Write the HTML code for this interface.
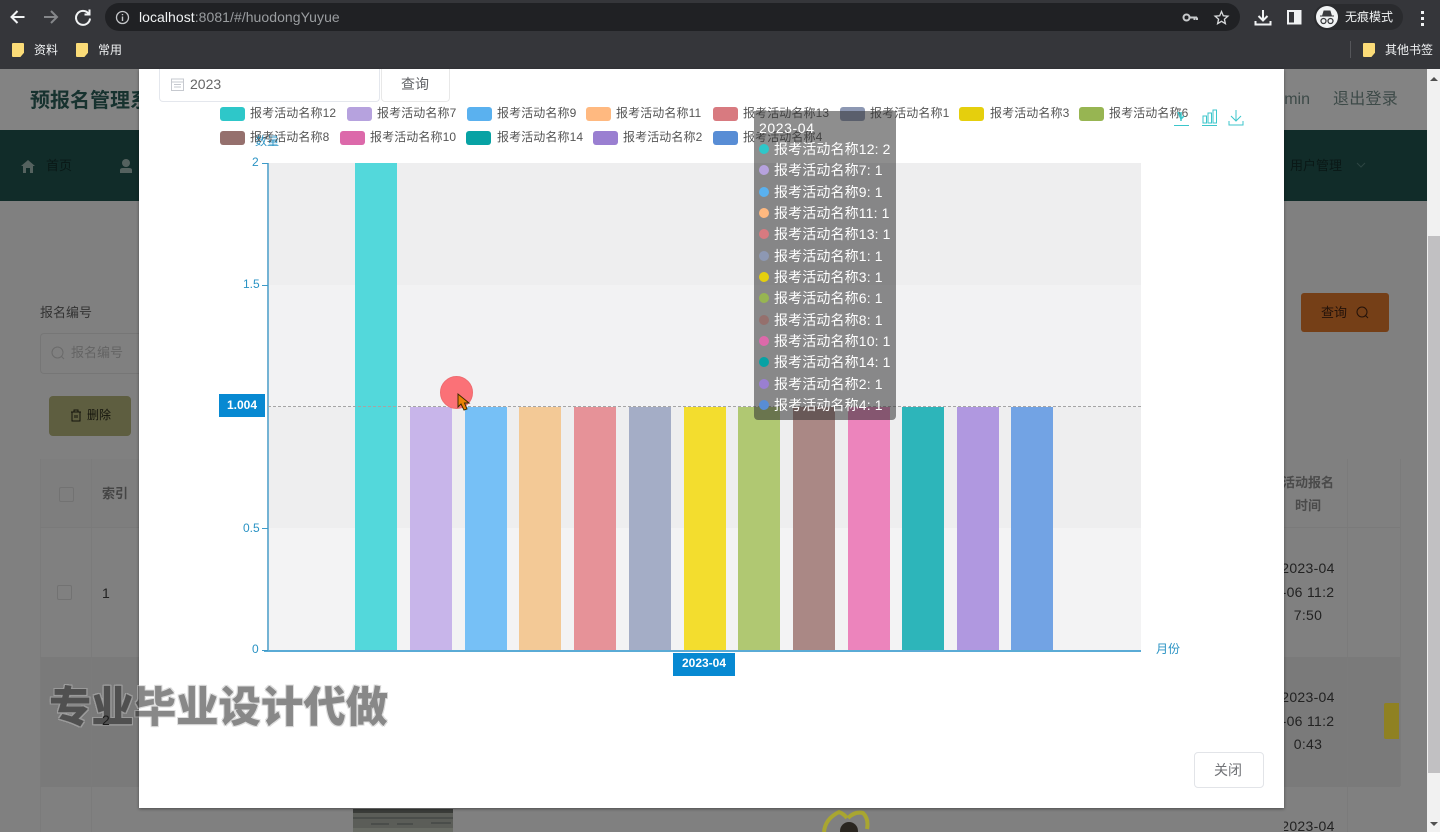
<!DOCTYPE html>
<html lang="zh"><head><meta charset="utf-8"><title>huodongYuyue</title>
<style>
*{box-sizing:border-box}
html,body{margin:0;padding:0;width:1440px;height:832px;overflow:hidden;background:#808080}
body{position:relative;font-family:"Liberation Sans","Noto Sans CJK SC",sans-serif;color:#333}
.a{position:absolute;white-space:nowrap}
.r{position:absolute}
.lg{position:absolute;width:25px;height:14px;border-radius:3px}
.lt{position:absolute;font-size:12px;line-height:15px;color:#555;white-space:nowrap;letter-spacing:.1px}
.bar{position:absolute;width:42px}
.tt{position:absolute;left:774px;font-size:14px;line-height:18px;color:#fff;white-space:nowrap;letter-spacing:.13px}
.dot{position:absolute;left:759px;width:10px;height:10px;border-radius:50%}
.ax{position:absolute;font-size:12px;line-height:14px;color:#2a93c4;white-space:nowrap}
.tick{position:absolute;left:262px;width:6px;height:1px;background:#3d9bc9}
.cell{position:absolute;width:1px;background:#7b7b7b}
.fold{position:absolute;width:12px;height:14px;background:#fbdc78;border-radius:1px;clip-path:polygon(0 0,100% 0,100% 70%,70% 100%,0 100%)}
.wm{position:absolute;white-space:nowrap;overflow:hidden;font-size:42.400px;font-weight:900;line-height:50px;font-family:"Noto Sans CJK SC",sans-serif}
</style></head><body>
<!-- browser chrome -->
<div class="r" style="left:0;top:0;width:1440px;height:69px;background:#35363a"></div>
<div class="r" style="left:105px;top:3px;width:1135px;height:28px;border-radius:14px;background:#202124"></div>
<svg class="r" style="left:0;top:0" width="110" height="34" viewBox="0 0 110 34" fill="none">
<path d="M24.500 17H12M17.500 11L11.500 17L17.500 23" stroke="#f1f3f4" stroke-width="2"/>
<path d="M44 17H56.500M51 11L57 17L51 23" stroke="#85878a" stroke-width="2"/>
<path d="M88.500 13.500A7 7 0 1 0 90 18.500M89.500 9.500V14.500H84.500" stroke="#f1f3f4" stroke-width="2"/>
</svg>
<svg class="r" style="left:115px;top:10px" width="15" height="15" viewBox="0 0 15 15" fill="none"><circle cx="7.500" cy="7.500" r="6" stroke="#c4c6c9" stroke-width="1.300"/><path d="M7.500 6.500V11M7.500 4V5.200" stroke="#c4c6c9" stroke-width="1.400"/></svg>
<div class="a" style="left:139px;top:8px;font-size:14px;line-height:18px;color:#9a9da0;letter-spacing:.05px"><span style="color:#f1f3f4">localhost</span>:8081/#/huodongYuyue</div>
<svg class="r" style="left:1180px;top:8px" width="250" height="20" viewBox="0 0 250 20" fill="none">
<circle cx="6.500" cy="9.500" r="3" stroke="#c8cacc" stroke-width="2"/><path d="M9.500 9.500H17M14.500 9.500V12M17 9.500V12" stroke="#c8cacc" stroke-width="2"/>
<path d="M41.500 3.500L43.300 7.800L47.900 8.200L44.400 11.200L45.400 15.700L41.500 13.300L37.600 15.700L38.600 11.200L35.100 8.200L39.700 7.800Z" stroke="#d8dadc" stroke-width="1.300"/>
<path d="M83 2V12M78.500 8L83 12.500L87.500 8M75.500 13V16.500H90.500V13" stroke="#f1f3f4" stroke-width="2"/>
<rect x="108" y="3" width="12.500" height="12.500" stroke="#f1f3f4" stroke-width="2"/><rect x="114" y="3" width="7" height="13" fill="#f1f3f4"/>
</svg>
<div class="r" style="left:1314px;top:4px;width:89px;height:26px;border-radius:13px;background:#2a2b2e"></div>
<div class="r" style="left:1316px;top:6px;width:22px;height:22px;border-radius:50%;background:#f1f3f4"></div>
<svg class="r" style="left:1316px;top:6px" width="22" height="22" viewBox="0 0 22 22" fill="none"><path d="M4 10H18M6.500 10L8 5H14L15.500 10Z" fill="#3a3b3e" stroke="#3a3b3e"/><circle cx="7.500" cy="15" r="2.500" stroke="#3a3b3e" stroke-width="1.300"/><circle cx="14.500" cy="15" r="2.500" stroke="#3a3b3e" stroke-width="1.300"/></svg>
<div class="a" style="left:1345px;top:10px;font-size:12px;line-height:15px;color:#f1f3f4">无痕模式</div>
<div class="r" style="left:1421px;top:11px;width:3px;height:3px;background:#f1f3f4;box-shadow:0 6px #f1f3f4,0 12px #f1f3f4"></div>
<div class="fold" style="left:12px;top:43px"></div>
<div class="a" style="left:34px;top:42px;font-size:12px;line-height:16px;color:#f1f3f4">资料</div>
<div class="fold" style="left:76px;top:43px"></div>
<div class="a" style="left:98px;top:42px;font-size:12px;line-height:16px;color:#f1f3f4">常用</div>
<div class="r" style="left:1350px;top:41px;width:1px;height:17px;background:#55565a"></div>
<div class="fold" style="left:1363px;top:43px"></div>
<div class="a" style="left:1385px;top:42px;font-size:12px;line-height:16px;color:#f1f3f4">其他书签</div>

<!-- dimmed page -->
<div class="r" style="left:0;top:69px;width:1427px;height:61px;background:#838383"></div>
<div class="a" style="left:30px;top:87px;font-size:20px;font-weight:700;line-height:28px;color:#17322f;width:109px;overflow:hidden">预报名管理系统</div>
<div class="a" style="left:1284px;top:90px;font-size:16px;line-height:20px;color:#3d4a48;width:26px;overflow:hidden;text-align:right">min</div>
<div class="a" style="left:1333px;top:90px;font-size:16px;line-height:20px;color:#3d4a48;letter-spacing:.25px">退出登录</div>
<div class="r" style="left:0;top:130px;width:1427px;height:71px;background:#112c29"></div>
<svg class="r" style="left:20px;top:158px" width="125" height="18" viewBox="0 0 125 18"><path d="M1 8L8 2L15 8H13V15H10V10H6V15H3V8Z" fill="#55625f"/><circle cx="106" cy="5" r="4" fill="#55625f"/><path d="M100 15V12Q100 10 103 10H109Q112 10 112 12V15Z" fill="#55625f"/></svg>
<div class="a" style="left:46px;top:157px;font-size:13px;line-height:18px;color:#0a1816">首页</div>
<div class="a" style="left:1290px;top:157px;font-size:13px;line-height:18px;color:#0a1816">用户管理</div>
<svg class="r" style="left:1356px;top:162px" width="10" height="7" viewBox="0 0 10 7" fill="none"><path d="M1 1L5 5L9 1" stroke="#2c4542"/></svg>

<div class="a" style="left:40px;top:304px;font-size:13px;line-height:18px;color:#333">报名编号</div>
<div class="r" style="left:40px;top:333px;width:99px;height:41px;border:1px solid #767676;border-right:0;border-radius:4px 0 0 4px"></div>
<svg class="r" style="left:50px;top:345px" width="16" height="16" viewBox="0 0 16 16" fill="none"><circle cx="7.500" cy="7.500" r="5.500" stroke="#6a6a6a"/><path d="M11.500 11.500L14 14" stroke="#6a6a6a"/></svg>
<div class="a" style="left:71px;top:344px;font-size:13px;line-height:18px;color:#646464">报名编号</div>
<div class="r" style="left:49px;top:396px;width:82px;height:40px;border-radius:4px;background:#5e5e40"></div>
<svg class="r" style="left:70px;top:409px" width="12" height="13" viewBox="0 0 12 13" fill="none"><path d="M1 3H11M4 3V1H8V3M2 3V12H10V3M5 6V9M7 6V9" stroke="#14140c"/></svg>
<div class="a" style="left:87px;top:407px;font-size:12px;line-height:17px;color:#14140c">删除</div>
<div class="r" style="left:40px;top:459px;width:99px;height:68px;background:#7e7e7e"></div>
<div class="r" style="left:40px;top:658px;width:99px;height:128px;background:#7a7a7a"></div>
<div class="r" style="left:1284px;top:658px;width:116px;height:128px;background:#7a7a7a"></div>
<div class="cell" style="left:40px;top:459px;height:373px"></div>
<div class="cell" style="left:91px;top:459px;height:373px"></div>
<div class="r" style="left:40px;top:527px;width:99px;height:1px;background:#7a7a7a"></div>
<div class="r" style="left:40px;top:657px;width:99px;height:1px;background:#7a7a7a"></div>
<div class="r" style="left:40px;top:786px;width:99px;height:1px;background:#7a7a7a"></div>
<div class="r" style="left:59px;top:487px;width:15px;height:15px;border:1px solid #727272;border-radius:2px"></div>
<div class="r" style="left:57px;top:585px;width:15px;height:15px;border:1px solid #727272;border-radius:2px"></div>
<div class="a" style="left:102px;top:485px;font-size:13px;font-weight:700;line-height:18px;color:#454545">索引</div>
<div class="a" style="left:102px;top:584px;font-size:14px;line-height:18px;color:#222">1</div>
<!-- right part of the table -->
<div class="r" style="left:1301px;top:293px;width:88px;height:39px;border-radius:3px;background:#753f17"></div>
<div class="a" style="left:1321px;top:304px;font-size:13px;line-height:18px;color:#23120a">查询</div>
<svg class="r" style="left:1355px;top:305px" width="15" height="15" viewBox="0 0 15 15" fill="none"><circle cx="7" cy="7" r="5" stroke="#23120a"/><path d="M10.500 10.500L13 13" stroke="#23120a"/></svg>
<div class="cell" style="left:1347px;top:459px;height:373px"></div>
<div class="cell" style="left:1400px;top:459px;height:327px"></div>
<div class="r" style="left:1284px;top:527px;width:116px;height:1px;background:#7a7a7a"></div>
<div class="r" style="left:1284px;top:657px;width:116px;height:1px;background:#7a7a7a"></div>
<div class="r" style="left:1284px;top:786px;width:116px;height:1px;background:#7a7a7a"></div>
<div class="a" style="left:1268px;top:471px;width:80px;text-align:center;font-size:13px;font-weight:700;line-height:23px;color:#4a4a4a;white-space:normal;clip-path:inset(0 0 0 16px)">活动报名<br>时间</div>
<div class="a" style="left:1268px;top:557px;width:80px;text-align:center;font-size:14px;line-height:23.500px;letter-spacing:.3px;color:#222;clip-path:inset(0 0 0 16px)">2023-04<br>-06 11:2<br>7:50</div>
<div class="a" style="left:1268px;top:686px;width:80px;text-align:center;font-size:14px;line-height:23.500px;letter-spacing:.3px;color:#222;clip-path:inset(0 0 0 16px)">2023-04<br>-06 11:2<br>0:43</div>
<div class="a" style="left:1268px;top:815px;width:80px;text-align:center;font-size:14px;line-height:23.500px;letter-spacing:.3px;color:#222;clip-path:inset(0 0 0 16px)">2023-04</div>
<div class="r" style="left:1384px;top:703px;width:15px;height:36px;background:#8f8122;border-radius:2px 0 0 2px"></div>
<svg class="r" style="left:353px;top:809px" width="100" height="23" viewBox="0 0 100 23"><rect width="100" height="23" fill="#5b5d58"/><rect width="100" height="4" fill="#3a3c39"/><path d="M0 9H100M18 15H36M44 15H60M78 14H98" stroke="#4a4d4a" stroke-width="2"/><rect x="0" y="19" width="100" height="4" fill="#686b64"/></svg>
<svg class="r" style="left:815px;top:809px" width="60" height="23" viewBox="0 0 60 23" fill="none"><path d="M9 23Q10 10 24 3Q29 5 32 9M33 9Q40 2 48 4Q54 10 52 20" stroke="#a9a631" stroke-width="4"/><circle cx="34" cy="22" r="9" fill="#2a2620"/></svg>

<!-- scrollbar -->
<div class="r" style="left:1427px;top:69px;width:13px;height:763px;background:#f1f1f1"></div>
<div class="r" style="left:1428px;top:236px;width:12px;height:537px;background:#c1c0c2"></div>
<div class="r" style="left:1430px;top:77px;border-left:4px solid transparent;border-right:4px solid transparent;border-bottom:4px solid #505050"></div>
<div class="r" style="left:1430px;top:822px;border-left:4px solid transparent;border-right:4px solid transparent;border-top:4px solid #505050"></div>

<!-- modal -->
<div class="r" style="left:139px;top:69px;width:1145px;height:739px;background:#fff;box-shadow:0 1px 3px rgba(0,0,0,.4)"></div>
<div class="r" style="left:159px;top:69px;width:221px;height:33px;border:1px solid #e4e7ed;border-top:0;border-radius:0 0 4px 4px"></div>
<svg class="r" style="left:170px;top:77px" width="15" height="15" viewBox="0 0 15 15" fill="none"><rect x="1.500" y="2" width="12" height="11.500" stroke="#c6c9cf"/><path d="M1.500 5H13.500M4 7.500H11M4 10H11" stroke="#c6c9cf"/></svg>
<div class="a" style="left:190px;top:75px;font-size:14px;line-height:18px;color:#666">2023</div>
<div class="r" style="left:381px;top:69px;width:69px;height:33px;border:1px solid #e8e8e8;border-top:0;border-radius:0 0 4px 4px"></div>
<div class="a" style="left:401px;top:75px;font-size:14px;line-height:18px;color:#606266">查询</div>

<!-- chart grid -->
<div class="r" style="left:268px;top:163px;width:873px;height:122px;background:#eeeeef"></div>
<div class="r" style="left:268px;top:285px;width:873px;height:122px;background:#f2f2f3"></div>
<div class="r" style="left:268px;top:407px;width:873px;height:121px;background:#eeeeef"></div>
<div class="r" style="left:268px;top:528px;width:873px;height:123px;background:#f3f3f4"></div>
<!-- bars -->
<div class="bar" style="left:355px;top:163px;height:488px;background:#53d8db"></div>
<div class="bar" style="left:410px;top:407px;height:244px;background:#c8b5ea"></div>
<div class="bar" style="left:465px;top:407px;height:244px;background:#76c0f6"></div>
<div class="bar" style="left:519px;top:407px;height:244px;background:#f3c996"></div>
<div class="bar" style="left:574px;top:407px;height:244px;background:#e69298"></div>
<div class="bar" style="left:629px;top:407px;height:244px;background:#a4adc6"></div>
<div class="bar" style="left:684px;top:407px;height:244px;background:#f3dd2e"></div>
<div class="bar" style="left:738px;top:407px;height:244px;background:#b0c872"></div>
<div class="bar" style="left:793px;top:407px;height:244px;background:#aa8885"></div>
<div class="bar" style="left:848px;top:407px;height:244px;background:#ec84bc"></div>
<div class="bar" style="left:902px;top:407px;height:244px;background:#2db5ba"></div>
<div class="bar" style="left:957px;top:407px;height:244px;background:#b098e0"></div>
<div class="bar" style="left:1011px;top:407px;height:244px;background:#72a3e4"></div>
<!-- axes -->
<div class="r" style="left:267px;top:163px;width:2px;height:488px;background:#74b3d4"></div>
<div class="r" style="left:264px;top:650px;width:877px;height:2px;background:#5aabd6"></div>
<div class="tick" style="top:163px"></div><div class="tick" style="top:285px"></div><div class="tick" style="top:528px"></div><div class="tick" style="top:650px"></div>
<div class="ax" style="left:252px;top:155px">2</div>
<div class="ax" style="left:243px;top:277px">1.5</div>
<div class="ax" style="left:243px;top:521px">0.5</div>
<div class="ax" style="left:252px;top:642px">0</div>
<div class="ax" style="left:255px;top:134px">数量</div>
<div class="ax" style="left:1156px;top:642px">月份</div>
<div class="r" style="left:268px;top:406px;width:873px;height:0;border-top:1px dashed #a5a5a5"></div>
<div class="r" style="left:219px;top:394px;width:46px;height:23px;background:#0789d2"></div>
<div class="a" style="left:219px;top:397px;width:46px;text-align:center;font-size:12px;font-weight:700;line-height:16px;color:#fff">1.004</div>
<div class="r" style="left:673px;top:653px;width:62px;height:23px;background:#0789d2"></div>
<div class="a" style="left:673px;top:656px;width:62px;text-align:center;font-size:12px;font-weight:700;line-height:15px;color:#fff">2023-04</div>

<!-- legend -->
<div class="lg" style="left:220px;top:107px;background:#2ec7c9"></div><div class="lt" style="left:250px;top:106px">报考活动名称12</div>
<div class="lg" style="left:347px;top:107px;background:#b6a2de"></div><div class="lt" style="left:377px;top:106px">报考活动名称7</div>
<div class="lg" style="left:467px;top:107px;background:#5ab1ef"></div><div class="lt" style="left:497px;top:106px">报考活动名称9</div>
<div class="lg" style="left:586px;top:107px;background:#ffb980"></div><div class="lt" style="left:616px;top:106px">报考活动名称11</div>
<div class="lg" style="left:713px;top:107px;background:#d87a80"></div><div class="lt" style="left:743px;top:106px">报考活动名称13</div>
<div class="lg" style="left:840px;top:107px;background:#8d98b3"></div><div class="lt" style="left:870px;top:106px">报考活动名称1</div>
<div class="lg" style="left:959px;top:107px;background:#e5cf0d"></div><div class="lt" style="left:990px;top:106px">报考活动名称3</div>
<div class="lg" style="left:1079px;top:107px;background:#97b552"></div><div class="lt" style="left:1109px;top:106px">报考活动名称6</div>
<div class="lg" style="left:220px;top:131px;background:#95706d"></div><div class="lt" style="left:250px;top:130px">报考活动名称8</div>
<div class="lg" style="left:340px;top:131px;background:#dc69aa"></div><div class="lt" style="left:370px;top:130px">报考活动名称10</div>
<div class="lg" style="left:466px;top:131px;background:#07a2a4"></div><div class="lt" style="left:497px;top:130px">报考活动名称14</div>
<div class="lg" style="left:593px;top:131px;background:#9a7fd1"></div><div class="lt" style="left:623px;top:130px">报考活动名称2</div>
<div class="lg" style="left:713px;top:131px;background:#588dd5"></div><div class="lt" style="left:743px;top:130px">报考活动名称4</div>
<svg class="r" style="left:1170px;top:106px" width="80" height="22" viewBox="0 0 80 22" fill="none">
<path d="M4 19.500H19" stroke="#3cc6cb"/><path d="M8 6L11 13L14 10M11 6V15" stroke="#3cc6cb" stroke-width="1.500"/>
<path d="M32 19.500H47M33 17V10H36.500V17ZM38 17V7H41.500V17ZM43 17V4H46.500V17Z" stroke="#3cc6cb"/>
<path d="M66 4V15M61 10L66 15L71 10M59 15V19H73V15" stroke="#3cc6cb"/>
</svg>

<!-- tooltip -->
<div class="r" style="left:754px;top:111px;width:142px;height:309px;border-radius:0 0 4px 4px;background:rgba(50,50,50,.55)"></div>
<div class="tt" style="left:759px;top:119px;letter-spacing:.6px">2023-04</div>
<div class="dot" style="top:144px;background:#2ec7c9"></div><div class="tt" style="top:140px">报考活动名称12: 2</div>
<div class="dot" style="top:165px;background:#b6a2de"></div><div class="tt" style="top:161px">报考活动名称7: 1</div>
<div class="dot" style="top:187px;background:#5ab1ef"></div><div class="tt" style="top:183px">报考活动名称9: 1</div>
<div class="dot" style="top:208px;background:#ffb980"></div><div class="tt" style="top:204px">报考活动名称11: 1</div>
<div class="dot" style="top:229px;background:#d87a80"></div><div class="tt" style="top:225px">报考活动名称13: 1</div>
<div class="dot" style="top:251px;background:#8d98b3"></div><div class="tt" style="top:247px">报考活动名称1: 1</div>
<div class="dot" style="top:272px;background:#e5cf0d"></div><div class="tt" style="top:268px">报考活动名称3: 1</div>
<div class="dot" style="top:293px;background:#97b552"></div><div class="tt" style="top:289px">报考活动名称6: 1</div>
<div class="dot" style="top:315px;background:#95706d"></div><div class="tt" style="top:311px">报考活动名称8: 1</div>
<div class="dot" style="top:336px;background:#dc69aa"></div><div class="tt" style="top:332px">报考活动名称10: 1</div>
<div class="dot" style="top:357px;background:#07a2a4"></div><div class="tt" style="top:353px">报考活动名称14: 1</div>
<div class="dot" style="top:379px;background:#9a7fd1"></div><div class="tt" style="top:375px">报考活动名称2: 1</div>
<div class="dot" style="top:400px;background:#588dd5"></div><div class="tt" style="top:396px">报考活动名称4: 1</div>

<!-- cursor highlight -->
<div class="r" style="left:440px;top:376px;width:33px;height:33px;border-radius:50%;background:#fb7177;border:1px solid #ee6c70"></div>
<svg class="r" style="left:456px;top:392px" width="16" height="21" viewBox="0 0 16 21"><path d="M2 2V15L5 12L8 18L11 17L8.500 11H13Z" fill="#ec8205" stroke="#3c2a00"/></svg>

<!-- close button -->
<div class="r" style="left:1194px;top:752px;width:70px;height:36px;border:1px solid #e2e4e8;border-radius:4px;background:#fff"></div>
<div class="a" style="left:1214px;top:761px;font-size:14px;line-height:18px;color:#707276">关闭</div>

<!-- watermark -->
<div class="wm" style="left:49px;top:680px;color:#888;text-shadow:1px 1px 0 #ddd,-1px -1px 0 #ddd,1px -1px 0 #ddd,-1px 1px 0 #ddd">专业毕业设计代做</div>
<div class="wm" style="left:49px;top:680px;width:90px;color:#505050;text-shadow:1px 1px 0 #999,-1px -1px 0 #999,1px -1px 0 #999,-1px 1px 0 #999">专业毕业设计代做</div>
<div class="a" style="left:102px;top:711px;font-size:14px;line-height:18px;color:#1c1c1c">2</div>
</body></html>
